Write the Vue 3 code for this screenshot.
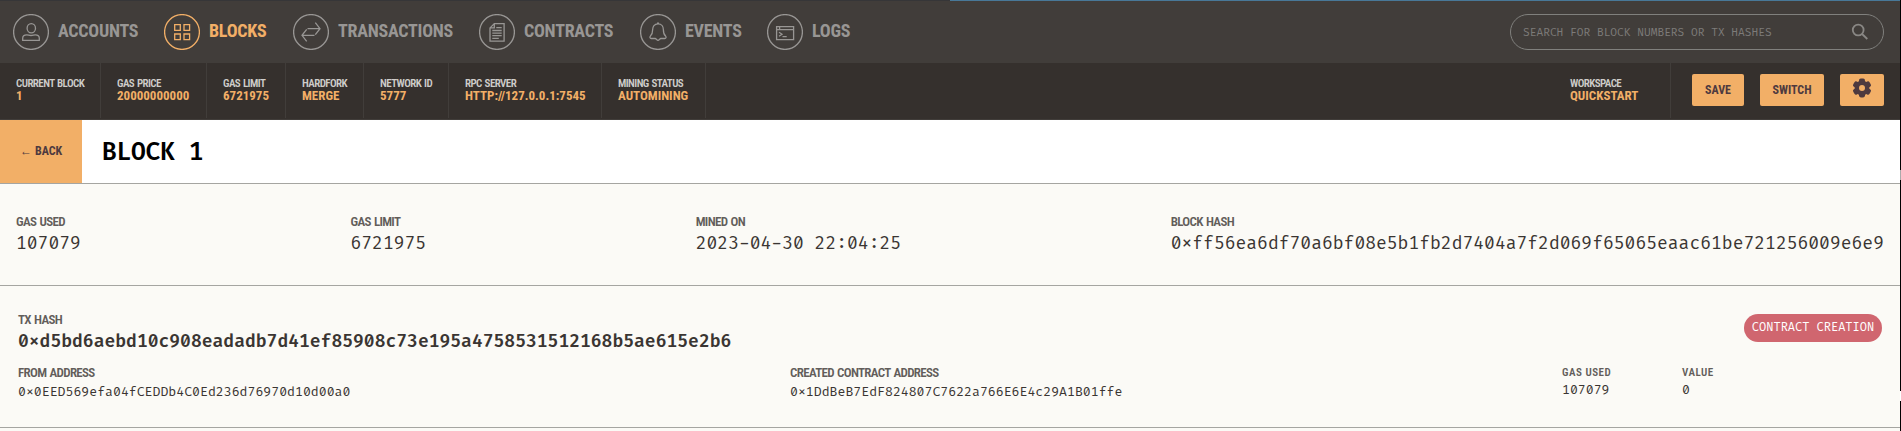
<script setup>
const nav = [
  { id: 'accounts', label: 'Accounts', width: 151 },
  { id: 'blocks', label: 'Blocks', width: 129, active: true },
  { id: 'transactions', label: 'Transactions', width: 186 },
  { id: 'contracts', label: 'Contracts', width: 161 },
  { id: 'events', label: 'Events', width: 127 },
  { id: 'logs', label: 'Logs', width: 90 },
]
const status = [
  { label: 'Current Block', value: '1' },
  { label: 'Gas Price', value: '20000000000' },
  { label: 'Gas Limit', value: '6721975' },
  { label: 'Hardfork', value: 'Merge' },
  { label: 'Network ID', value: '5777' },
  { label: 'RPC Server', value: 'http://127.0.0.1:7545' },
  { label: 'Mining Status', value: 'Automining' },
]
const details = [
  { label: 'Gas Used', value: '107079' },
  { label: 'Gas Limit', value: '6721975' },
  { label: 'Mined On', value: '2023-04-30 22:04:25' },
  { label: 'Block Hash', value: '0xff56ea6df70a6bf08e5b1fb2d7404a7f2d069f65065eaac61be721256009e6e9' },
]
</script>

<template>
  <div class="window">
    <main class="app">
      <header class="topbar">
        <nav class="nav">
          <a v-for="n in nav" :key="n.id" class="nav-item" :class="{ active: n.active }" :style="{ width: n.width + 'px' }">
            <svg class="nav-icon" viewBox="0 0 36 36" fill="none" stroke="currentColor" stroke-width="1.3">
              <circle cx="18" cy="18" r="17.4" />
              <g v-if="n.id === 'accounts'">
                <ellipse cx="18.3" cy="14.3" rx="4.2" ry="4.6" />
                <path d="M9.7 26.4v-2.200c0-2.400 1.600-3.400 4-3.400 1.500 0 2.500.7 4.300.7s2.800-.7 4.300-.7c2.400 0 4 1 4 3.400v2.200z" />
              </g>
              <g v-else-if="n.id === 'blocks'">
                <path d="M10.700 10.700h5.600v5.600h-5.600zM20 10.700h5.600v5.600H20zM10.700 20h5.600v5.600h-5.600zM20 20h5.600v5.600H20z" />
              </g>
              <g v-else-if="n.id === 'transactions'">
                <path d="M14.500 14.700h12M22.300 8.700l4.700 6-4.700 6M21.500 21.300h-12M13.700 15.300l-4.700 6 4.700 6" />
              </g>
              <g v-else-if="n.id === 'contracts'">
                <path d="M15.300 9.600h9.800v17.600H11V13.900zM15.300 9.600v4.300H11" />
                <path d="M17.300 13.600h5.400M13.300 16.500h9.400M13.300 19.100h9.400M13.300 21.700h9.400M13.300 24.300h6.500" />
              </g>
              <g v-else-if="n.id === 'events'">
                <path d="M18 9.900c-3.700 0-5.400 2.700-5.400 6 0 3.800-.8 5-2.200 6.200-.9.900-.5 2.400.8 2.400h3.900c1.200 0 1.600 1.900 2.900 1.900s1.700-1.900 2.900-1.900h3.900c1.300 0 1.700-1.500.8-2.400-1.400-1.200-2.200-2.400-2.200-6.200 0-3.300-1.700-6-5.400-6z" />
                <path d="M17 9.200h2" stroke-width="1.600" />
              </g>
              <g v-else>
                <path d="M9.600 12.600h17v13h-17zM9.600 15.600h17M12.600 12.600v3" />
                <path d="M12 18.200l3 2-3 2M15.500 22.600h4.200" />
              </g>
            </svg>
            <span>{{ n.label }}</span>
          </a>
        </nav>
        <div class="search">
          <span>Search for block numbers or tx hashes</span>
          <svg class="search-icon" viewBox="0 0 18 18" fill="none" stroke="currentColor" stroke-width="1.800">
            <circle cx="7.200" cy="7" r="5.400" />
            <path d="M11.100 11l5.200 5" />
          </svg>
        </div>
      </header>

      <section class="statusbar">
        <div class="status-grid">
          <div v-for="s in status" :key="s.label" class="status">
            <span class="status-label">{{ s.label }}</span>
            <span class="status-value">{{ s.value }}</span>
          </div>
        </div>
        <div class="workspace">
          <div class="status space">
            <span class="status-label">Workspace</span>
            <span class="status-value">Quickstart</span>
          </div>
          <div class="actions">
            <button class="btn save">Save</button>
            <button class="btn switch">Switch</button>
            <button class="btn gear" aria-label="Settings">
              <svg class="gear-icon" viewBox="0 0 20 20">
                <g fill="currentColor">
                  <rect v-for="a in [0, 60, 120]" :key="a" x="7" y="0.600" width="6" height="18.800" rx="1.800" :transform="`rotate(${a} 10 10)`" />
                  <circle cx="10" cy="10" r="7.400" />
                </g>
                <circle class="gear-hole" cx="10" cy="10" r="3" />
              </svg>
            </button>
          </div>
        </div>
      </section>

      <section class="titlebar">
        <button class="back"><span class="arrow">←</span><span>Back</span></button>
        <h1 class="title">Block 1</h1>
      </section>

      <section class="details">
        <div v-for="d in details" :key="d.label">
          <div class="label">{{ d.label }}</div>
          <div class="value">{{ d.value }}</div>
        </div>
      </section>

      <section class="tx">
        <div class="tx-head">
          <div>
            <div class="label">Tx Hash</div>
            <div class="value hash">0xd5bd6aebd10c908eadadb7d41ef85908c73e195a4758531512168b5ae615e2b6</div>
          </div>
          <span class="badge">Contract Creation</span>
        </div>
        <div class="tx-body">
          <div>
            <div class="label">From Address</div>
            <div class="small">0x0EED569efa04fCEDDb4C0Ed236d76970d10d00a0</div>
          </div>
          <div>
            <div class="label">Created Contract Address</div>
            <div class="small">0x1DdBeB7EdF824807C7622a766E6E4c29A1B01ffe</div>
          </div>
          <div>
            <div class="mini-label">Gas Used</div>
            <div class="small">107079</div>
          </div>
          <div>
            <div class="mini-label">Value</div>
            <div class="small">0</div>
          </div>
        </div>
      </section>
    </main>
    <aside class="edge"><i class="notch upper"></i><i class="notch lower"></i></aside>
  </div>
</template>

<style>
body { background: #fbfaf6; overflow: hidden; }
</style>

<style scoped>
* { box-sizing: border-box; }
.window {
  display: flex;
  width: 1901px;
  height: 431px;
  overflow: hidden;
  font-family: "Roboto Condensed", Roboto, "Liberation Sans", sans-serif;
  font-stretch: condensed;
  white-space: nowrap;
}
.app { width: 1900px; background: #fbfaf6; }
.edge { width: 1px; background: #000; padding-top: 170px; }
.notch { display: block; width: 1px; height: 10px; background: #aaa; }
.lower { margin-top: 211px; background: #fff; }

.topbar {
  display: flex;
  justify-content: space-between;
  height: 63px;
  padding: 13px 16px 0 13px;
  background: #413d3a;
  border-top: 1px solid;
  border-image: linear-gradient(to right, #363638 950px, #487898 950px) 1;
}
.nav { display: flex; }
.nav-item {
  display: flex;
  gap: 9px;
  height: 36px;
  color: #989694;
  font-size: 18px;
  font-weight: 700;
  line-height: 33px;
  letter-spacing: -0.25px;
  text-transform: uppercase;
}
.nav-item.active { color: #f2af67; }
.nav-icon { flex: none; width: 36px; height: 36px; }
.search {
  display: flex;
  align-items: center;
  justify-content: space-between;
  width: 374px;
  height: 36px;
  padding: 0 14px 0 12px;
  border: 1px solid #80807d;
  border-radius: 18px;
  color: #7d7b79;
  font: 10.93px "Fira Code", "DejaVu Sans Mono", monospace;
  text-transform: uppercase;
}
.search-icon { width: 18px; height: 18px; color: #898784; }

.statusbar {
  display: flex;
  justify-content: space-between;
  height: 57px;
  background: #35302d;
  border-bottom: 1px solid #413d3a;
}
.status-grid {
  display: grid;
  grid-template-columns: 101px 106px 79px 78px 85px 153px 104px;
  height: 55px;
}
.status {
  display: flex;
  flex-direction: column;
  height: 55px;
  padding: 15px 0 0 16px;
  border-right: 1px solid #413d3a;
  font-weight: 700;
  text-transform: uppercase;
}
.status-label { font-size: 11px; font-weight: 600; line-height: 12px; letter-spacing: -0.57px; word-spacing: 0.8px; color: #cfcdca; }
.status-value { font-size: 13px; line-height: 12px; color: #f2af67; }
.workspace { display: flex; padding-right: 16px; }
.space { width: 117px; }
.actions { display: flex; gap: 16px; padding: 11px 0 0 21px; }
.btn {
  height: 32px;
  padding: 0;
  border: 0;
  border-radius: 2px;
  background: #f2af67;
  color: #4e3a3f;
  font: inherit;
  font-size: 12px;
  font-weight: 700;
  text-transform: uppercase;
}
.save { width: 52px; }
.switch { width: 64px; }
.gear { display: flex; justify-content: center; width: 44px; padding-top: 4px; }
.gear-icon { width: 20px; height: 20px; }
.gear-hole { fill: #f2af67; }

.titlebar {
  display: flex;
  height: 64px;
  background: #fff;
  border-bottom: 1px solid #a5a5a1;
}
.back {
  display: flex;
  align-items: center;
  gap: 4px;
  width: 82px;
  padding: 0 0 1px 20px;
  border: 0;
  background: #f2af67;
  color: #4e3a3f;
  font: inherit;
  font-size: 12px;
  font-weight: 700;
  text-transform: uppercase;
}
.arrow { width: 11px; font-weight: 400; }
.title {
  margin: 0 0 0 20px;
  color: #000;
  font: 600 24px/65px "Fira Code", "DejaVu Sans Mono", monospace;
  letter-spacing: -0.3px;
  text-transform: uppercase;
}

.details {
  display: flex;
  justify-content: space-between;
  height: 102px;
  padding: 30px 16px 0;
  border-bottom: 1px solid #a5a5a1;
}
.label {
  margin-bottom: 3px;
  color: #625d5a;
  font-size: 13px;
  font-weight: 600;
  line-height: 16px;
  letter-spacing: -0.68px;
  word-spacing: 0.9px;
  text-transform: uppercase;
}
.value {
  color: #3a3532;
  font: 17.57px/22px "Fira Code", "DejaVu Sans Mono", monospace;
}
.hash { font-weight: 600; }

.tx { height: 142px; padding: 26px 18px 0; border-bottom: 1px solid #a5a5a1; }
.tx-head { display: flex; justify-content: space-between; }
.badge {
  width: 138px;
  height: 28px;
  margin-top: 2px;
  border-radius: 14px;
  background: #d0666f;
  color: #fff;
  font: 11.7px/27px "Fira Code", "DejaVu Sans Mono", monospace;
  text-align: center;
  text-transform: uppercase;
}
.tx-body { display: grid; grid-template-columns: 772px 772px 120px 1fr; margin-top: 12px; }
.mini-label {
  padding-top: 1px;
  margin-bottom: 2px;
  color: #625d5a;
  font-size: 11px;
  font-weight: 600;
  line-height: 14px;
  letter-spacing: 0.5px;
  text-transform: uppercase;
}
.small {
  color: #3a3532;
  font: 12.87px/16px "Fira Code", "DejaVu Sans Mono", monospace;
}
</style>
